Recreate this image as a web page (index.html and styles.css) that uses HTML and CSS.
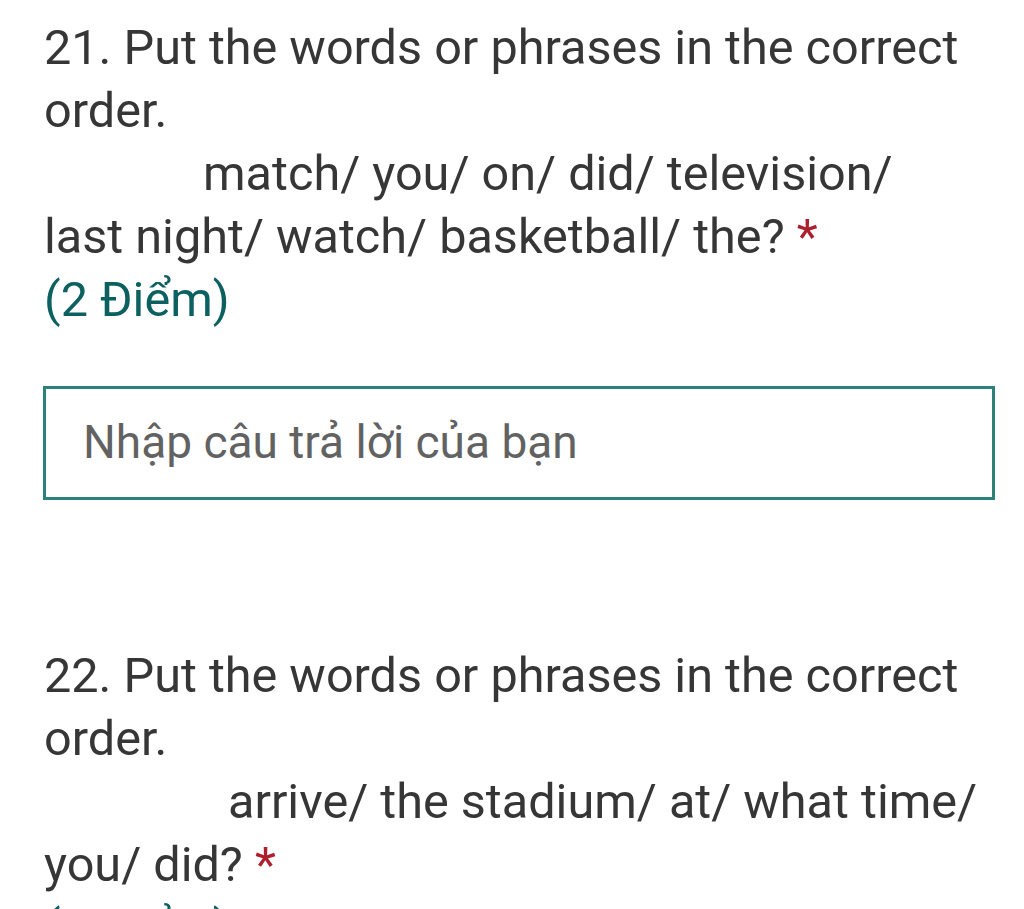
FILE: index.html
```html
<!DOCTYPE html>
<html lang="vi">
<head>
<meta charset="utf-8">
<title>Form</title>
<link rel="stylesheet" href="styles.css">
</head>
<body>
<main class="page">
  <section class="question q1">
    <div class="title">21. Put the words or phrases in the correct order.</div>
    <div class="prompt p1">match/ you/ on/ did/ television/ last night/ watch/ basketball/ the? <span class="req">*</span></div>
    <div class="points">(2 Điểm)</div>
    <div class="answer"><span class="placeholder">Nhập câu trả lời của bạn</span></div>
  </section>
  <section class="question q2">
    <div class="title">22. Put the words or phrases in the correct order.</div>
    <div class="prompt p2">arrive/ the stadium/ at/ what time/ you/ did? <span class="req">*</span></div>
    <div class="points">(2 Điểm)</div>
  </section>
</main>
</body>
</html>
```
FILE: styles.css
```css
html, body {
  margin: 0;
  padding: 0;
  background: #ffffff;
}
body {
  font-family: Roboto, "Noto Sans", sans-serif;
  color: #363636;
  overflow: hidden;
  height: 909px;
}
.page {
  padding: 16px 29px 0 44px;
  width: 951px;
}
.question {
  font-size: 48.6px;
  line-height: 63px;
}
.title {
  width: 930px;
}
.p1 { text-indent: 159px; width: 880px; }
.p2 { text-indent: 184px; width: 960px; }
.req {
  color: #ad1f2d;
}
.points {
  color: #0d6060;
}
.answer {
  margin-top: 55px;
  margin-left: -1px;
  border: 3px solid #2c8278;
  box-sizing: border-box;
  height: 114px;
  width: 952px;
  display: flex;
  align-items: center;
  padding-left: 37px;
}
.placeholder {
  font-size: 46px;
  line-height: 56px;
  color: #626262;
  margin-top: -2px;
}
.q2 {
  margin-top: 144px;
}
```
